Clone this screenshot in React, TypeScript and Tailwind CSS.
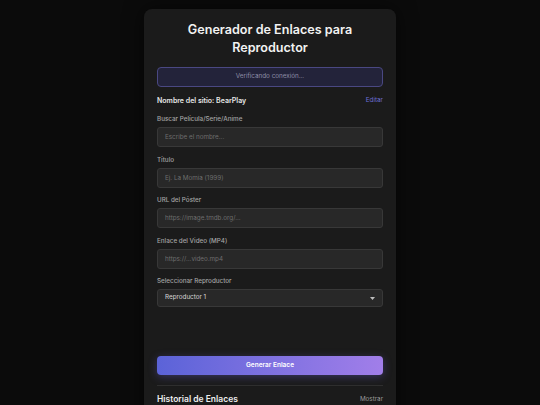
import React from "react";

const fields = [
  { label: "Buscar Película/Serie/Anime", placeholder: "Escribe el nombre..." },
  { label: "Título", placeholder: "Ej. La Momia (1999)" },
  { label: "URL del Póster", placeholder: "https://image.tmdb.org/..." },
  { label: "Enlace del Video (MP4)", placeholder: "https://...video.mp4" },
];

export default function App() {
  return (
    <div
      className="min-h-screen bg-[#0b0b0b] flex justify-center pt-[9px] overflow-hidden"
      style={{ fontFamily: "Inter, 'Noto Sans', sans-serif" }}
    >
      <div className="w-[252px] h-[420px] bg-[#1b1b1b] rounded-lg px-[13px] pt-[12px] shadow-[0_0_20px_rgba(0,0,0,0.6)]">
        <h1 className="text-center text-[12.6px] leading-[18px] font-semibold text-[#f2f2f2]">
          Generador de Enlaces para
          <br />
          Reproductor
        </h1>

        <div className="mt-[10px] h-[20px] rounded-[4px] border border-[#4a4882] bg-[#23233a] flex items-center justify-center text-[6.3px] text-[#8e8ea6]">
          Verificando conexión...
        </div>

        <div className="mt-[9px] h-[10px] flex items-center justify-between">
          <span className="text-[7px] font-semibold text-[#e6e6e6]">Nombre del sitio: BearPlay</span>
          <span className="text-[6.3px] text-[#6d6fd6]">Editar</span>
        </div>

        <div className="mt-[9px] flex flex-col">
          {fields.map((f) => (
            <div key={f.label} className="mb-[8.5px]">
              <div className="h-[8px] leading-[8px] text-[6.3px] font-medium text-[#a3a3a3]">{f.label}</div>
              <input
                className="block mt-[4px] w-full h-[20px] rounded-[3px] border border-[#383838] bg-[#282828] px-[7px] text-[6.3px] text-[#dddddd] placeholder:text-[#6e6e6e] outline-none"
                placeholder={f.placeholder}
              />
            </div>
          ))}
          <div>
            <div className="h-[8px] leading-[8px] text-[6.3px] font-medium text-[#a3a3a3]">Seleccionar Reproductor</div>
            <div className="mt-[4px] w-full h-[18px] rounded-[3px] border border-[#383838] bg-[#282828] px-[7px] flex items-center justify-between">
              <span className="text-[6.3px] text-[#d8d8d8]">Reproductor 1</span>
              <svg width="5" height="3" viewBox="0 0 5 3">
                <path d="M0 0h5L2.5 3z" fill="#bdbdbd" />
              </svg>
            </div>
          </div>
        </div>

        <button className="block mt-[49px] w-full h-[19px] rounded-[4px] bg-gradient-to-r from-[#5b63d8] to-[#a17ee9] text-[6.5px] font-semibold text-white shadow-[0_2px_8px_rgba(110,100,220,0.35)]">
          Generar Enlace
        </button>

        <div className="mt-[10px] border-t border-[#2e2e2e]" />

        <div className="mt-[7px] flex items-center justify-between">
          <span className="text-[8.5px] font-semibold text-[#eeeeee]">Historial de Enlaces</span>
          <span className="text-[6.3px] text-[#9a9a9a]">Mostrar</span>
        </div>
      </div>
    </div>
  );
}
